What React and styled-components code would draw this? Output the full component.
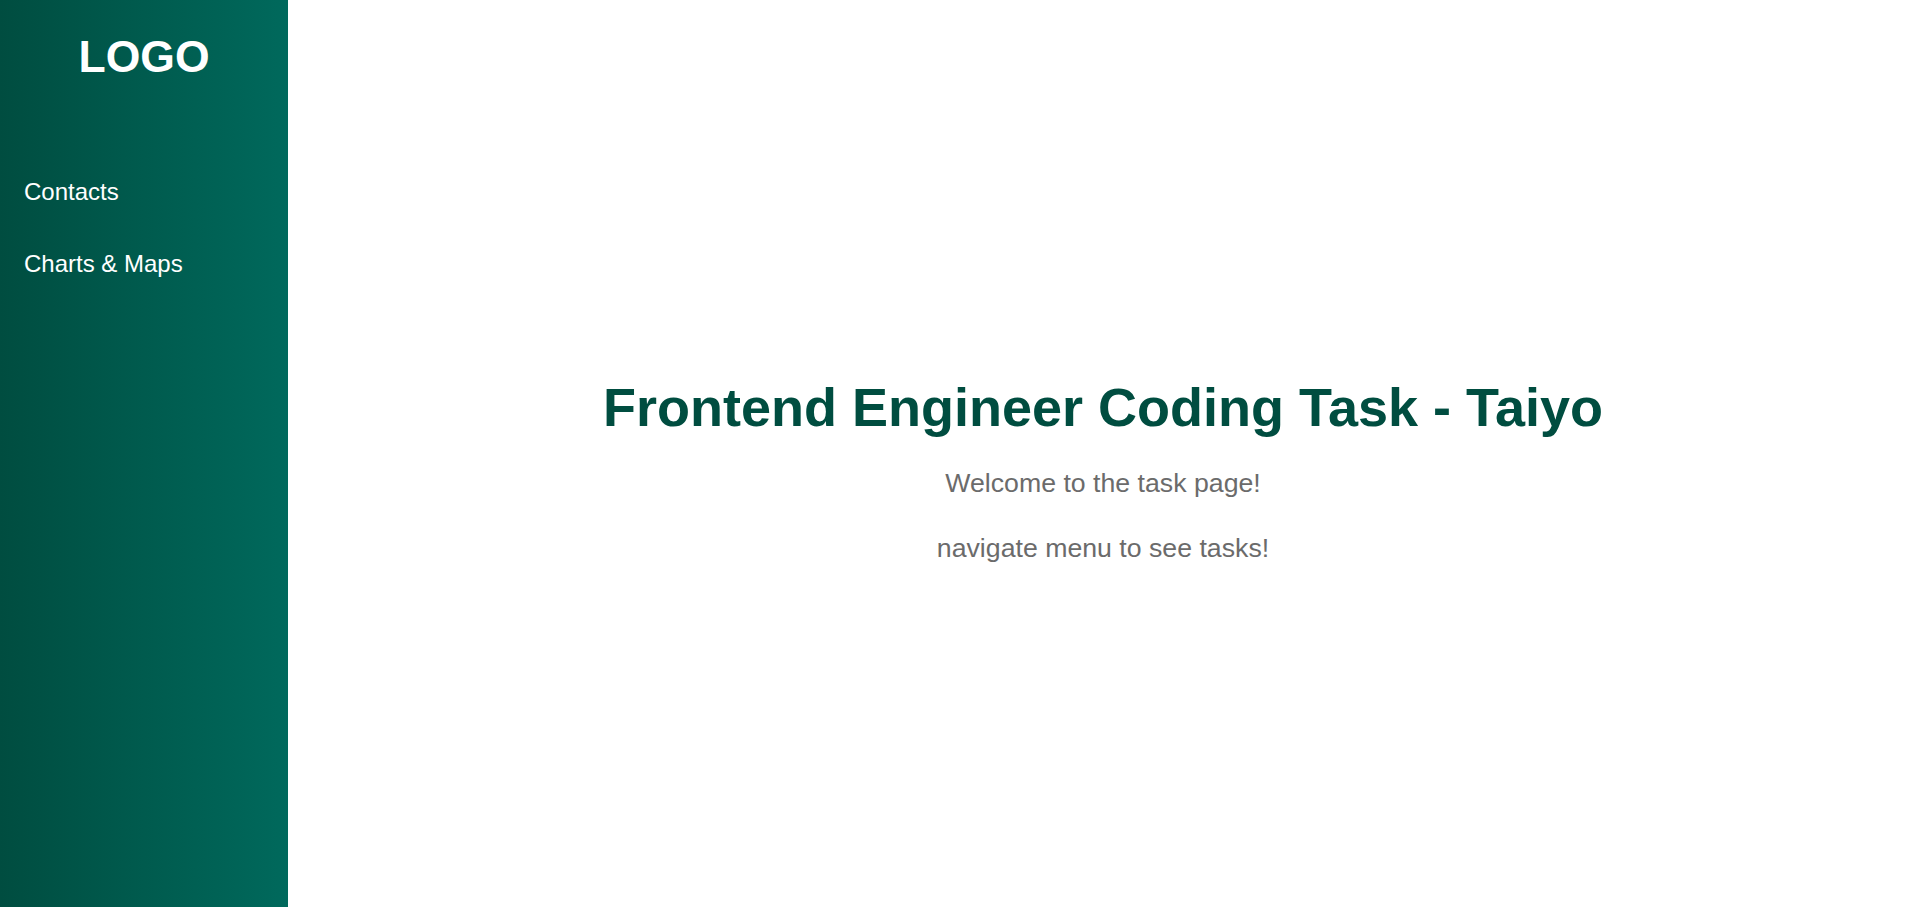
import React from "react";
import styled, { createGlobalStyle } from "styled-components";

const GlobalStyle = createGlobalStyle`
  html, body {
    margin: 0;
    padding: 0;
    background: #ffffff;
    font-family: "Liberation Sans", Arial, sans-serif;
  }
`;

const App = () => {
  return (
    <>
      <GlobalStyle />
      <Layout>
        <Sidebar>
          <Logo>LOGO</Logo>
          <Nav>
            <NavLink href="#contacts">Contacts</NavLink>
            <NavLink href="#charts">Charts &amp; Maps</NavLink>
          </Nav>
        </Sidebar>

        <Main>
          <Title>Frontend Engineer Coding Task - Taiyo</Title>
          <Text>Welcome to the task page!</Text>
          <Text>navigate menu to see tasks!</Text>
        </Main>
      </Layout>
    </>
  );
};

const Layout = styled.div`
  display: flex;
  min-height: 100vh;
`;

const Sidebar = styled.aside`
  width: 288px;
  flex-shrink: 0;
  display: flex;
  flex-direction: column;
  padding-top: 32px;
  box-sizing: border-box;
  background: linear-gradient(to right, #004d40, #00695c);
  color: #ffffff;
`;

const Logo = styled.div`
  font-size: 44.5px;
  font-weight: bold;
  text-align: center;
  line-height: normal;
`;

const Nav = styled.nav`
  display: flex;
  flex-direction: column;
  margin-top: 74px;
`;

const NavLink = styled.a`
  display: block;
  padding: 22px 24px;
  font-size: 24px;
  line-height: normal;
  color: #ffffff;
  text-decoration: none;
`;

const Main = styled.main`
  flex: 1;
  display: flex;
  flex-direction: column;
  align-items: center;
  justify-content: center;
  text-align: center;
`;

const Title = styled.h1`
  margin: 33px 0 30px;
  font-size: 54px;
  font-weight: bold;
  line-height: normal;
  color: #004d40;
`;

const Text = styled.p`
  margin: 0;
  font-size: 26.7px;
  line-height: normal;
  color: #6b6b6b;

  & + & {
    margin-top: 34px;
  }
`;

export default App;
